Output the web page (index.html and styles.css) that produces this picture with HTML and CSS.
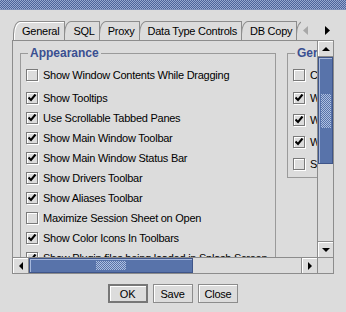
FILE: index.html
```html
<!DOCTYPE html>
<html lang="en">
<head>
  <meta charset="UTF-8" />
  <title>Global Preferences</title>
  <link rel="stylesheet" href="styles.css">
</head>
<body>
  <div class="titlebar"></div>

  <div class="tabstrip">
    <div class="tabs">
      <div class="tab selected">General</div>
      <div class="tab">SQL</div>
      <div class="tab">Proxy</div>
      <div class="tab">Data Type Controls</div>
      <div class="tab">DB Copy</div>
      <div class="tab">Fonts</div>
    </div>
    <div class="tab-arrows">
      <svg width="12" height="11" viewBox="0 0 12 11"><path d="M6 1 L1 5.5 L6 10 Z" fill="#a8a8a8"/></svg>
      <svg width="12" height="11" viewBox="0 0 12 11"><path d="M5 1 L10 5.5 L5 10 Z" fill="#000"/></svg>
    </div>
  </div>

  <div class="scrollpane">
    <div class="viewport">
      <div class="canvas">
        <fieldset class="group appearance">
          <legend>Appearance</legend>
          <label class="row first"><span class="box"></span>Show Window Contents While Dragging</label>
          <label class="row"><span class="box on"></span>Show Tooltips</label>
          <label class="row"><span class="box on"></span>Use Scrollable Tabbed Panes</label>
          <label class="row"><span class="box on"></span>Show Main Window Toolbar</label>
          <label class="row"><span class="box on"></span>Show Main Window Status Bar</label>
          <label class="row"><span class="box on"></span>Show Drivers Toolbar</label>
          <label class="row"><span class="box on"></span>Show Aliases Toolbar</label>
          <label class="row"><span class="box"></span>Maximize Session Sheet on Open</label>
          <label class="row"><span class="box on"></span>Show Color Icons In Toolbars</label>
          <label class="row"><span class="box on"></span>Show Plugin files being loaded in Splash Screen</label>
          <label class="row"><span class="box"></span>Use Short Session Title</label>
        </fieldset>

        <fieldset class="group general">
          <legend>General</legend>
          <label class="row first"><span class="box"></span>Confirm Session Close</label>
          <label class="row"><span class="box on"></span>Warn if JDBC driver not found</label>
          <label class="row"><span class="box on"></span>Warn for unsaved SQL files</label>
          <label class="row"><span class="box on"></span>Warn for unsaved SQL edits</label>
          <label class="row"><span class="box"></span>Save preferences immediately</label>
        </fieldset>
      </div>
    </div>

    <div class="vbar">
      <div class="arrow-btn"><svg width="14" height="14" viewBox="0 0 14 14"><path d="M3 9 L11 9 L7 5 Z" fill="#000"/></svg></div>
      <div class="track">
        <div class="thumb vthumb"><span class="grip"></span></div>
      </div>
      <div class="arrow-btn"><svg width="14" height="14" viewBox="0 0 14 14"><path d="M3 5 L11 5 L7 9 Z" fill="#000"/></svg></div>
    </div>

    <div class="hbar">
      <div class="arrow-btn"><svg width="14" height="14" viewBox="0 0 14 14"><path d="M9 3 L9 11 L5 7 Z" fill="#000"/></svg></div>
      <div class="track">
        <div class="thumb hthumb"><span class="grip"></span></div>
      </div>
      <div class="arrow-btn"><svg width="14" height="14" viewBox="0 0 14 14"><path d="M5 3 L5 11 L9 7 Z" fill="#000"/></svg></div>
    </div>

    <div class="corner"></div>
  </div>

  <div class="buttons">
    <button class="default">OK</button>
    <button>Save</button>
    <button>Close</button>
  </div>
</body>
</html>
```

FILE: styles.css
```css
* { box-sizing: border-box; margin: 0; padding: 0; }
body {
  width: 346px;
  height: 312px;
  overflow: hidden;
  background-color: #dcdcdc;
  font-family: "Liberation Sans", Arial, sans-serif;
  font-size: 11px;
  letter-spacing: -0.25px;
  color: #000;
}
.titlebar {
  height: 10px;
  background: repeating-conic-gradient(#4c6399 0 25%, #95a8d0 0 50%) 0 0 / 2px 2px;
  border-bottom: 1px solid #7f91ba;
}

/* tabs */
.tabstrip {
  display: flex;
  margin-top: 11px;
  height: 19px;
}
.tabs {
  display: flex;
  width: 301px;
  padding-left: 13px;
  overflow: hidden;
}
.tab {
  flex: none;
  height: 19px;
  line-height: 17px;
  padding: 1px 4px 0 8px;
  margin-right: -1px;
  border-top: 1px solid #8c8c8c;
  border-left: 1px solid #8c8c8c;
  border-right: 1px solid #8c8c8c;
  border-top-left-radius: 7px 13px;
  background-color: #dcdcdc;
}
.tab.selected {
  padding-right: 5px;
  box-shadow: inset 1px 1px 0 #fff;
}
.tab-arrows {
  display: flex;
  align-items: center;
  gap: 6px;
  padding-left: 1px;
}

/* scroll pane */
.scrollpane {
  display: grid;
  grid-template-columns: 304px 16px;
  grid-template-rows: 216px 16px;
  margin-left: 12px;
  width: 322px;
  height: 234px;
  border: 1px solid #8c8c8c;
}
.viewport {
  overflow: hidden;
}
.canvas {
  display: flex;
  gap: 11px;
  padding: 5px 0 0 7px;
  width: 500px;
}
.group {
  border: 1px solid #9a9a9a;
  padding: 5px 4px 3px 5px;
  flex: none;
}
.group legend {
  font-weight: bold;
  font-size: 12px;
  letter-spacing: 0;
  color: #3a4f91;
  line-height: 14px;
  margin-left: 2px;
  padding: 0 2px;
}
.appearance {
  width: 256px;
}
.general {
  width: 220px;
  align-self: flex-start;
}
.row {
  display: flex;
  align-items: center;
  gap: 5px;
  height: 20px;
  white-space: nowrap;
}
.row.first {
  margin-bottom: 3px;
}
.general .row + .row {
  margin-top: 2px;
}
.box {
  width: 12px;
  height: 12px;
  margin-bottom: 1px;
  border: 1px solid #7a7a7a;
  box-shadow: 1px 1px 0 #fff, inset 1px 1px 0 #fff;
  flex: none;
}
.box.on {
  background: url("data:image/svg+xml;utf8,<svg xmlns='http://www.w3.org/2000/svg' width='10' height='10' viewBox='0 0 10 10'><path d='M1.5 4.5 L4 7 L8.5 1.5' stroke='black' stroke-width='2' fill='none'/></svg>") center / 10px 10px no-repeat;
}

/* scrollbars */
.vbar, .hbar {
  display: flex;
  background-color: #dcdcdc;
}
.vbar {
  flex-direction: column;
  border-left: 1px solid #8c8c8c;
}
.hbar {
  border-top: 1px solid #8c8c8c;
}
.arrow-btn {
  flex: none;
  display: flex;
  align-items: center;
  justify-content: center;
  box-shadow: inset 1px 1px 0 #fff;
}
.vbar .arrow-btn { width: 15px; height: 16px; }
.vbar .arrow-btn:last-child { border-top: 1px solid #8c8c8c; }
.vbar .arrow-btn:first-child { border-bottom: 1px solid #8c8c8c; }
.hbar .arrow-btn { width: 16px; height: 15px; }
.hbar .arrow-btn:first-child { border-right: 1px solid #8c8c8c; }
.hbar .arrow-btn:last-child { border-left: 1px solid #8c8c8c; }
.track {
  flex: 1;
  display: flex;
}
.vbar .track { flex-direction: column; }
.thumb {
  display: flex;
  align-items: center;
  justify-content: center;
  background-color: #5873aa;
  border: 1px solid #3f5589;
  box-shadow: inset 1px 1px 0 #a6b8dc;
}
.vthumb { height: 107px; }
.hthumb { width: 164px; }
.grip {
  background: repeating-conic-gradient(#5873aa 0 25%, #aebfe0 0 50%) 0 0 / 2px 2px;
}
.vthumb .grip { width: 10px; height: 34px; }
.hthumb .grip { width: 30px; height: 9px; }
.corner {
  border-top: 1px solid #8c8c8c;
  border-left: 1px solid #8c8c8c;
}

/* buttons */
.buttons {
  display: flex;
  justify-content: center;
  gap: 5px;
  margin-top: 10px;
}
button {
  font-family: inherit;
  font-size: 11px;
  letter-spacing: -0.25px;
  min-width: 40px;
  height: 19px;
  padding: 0 6px;
  background-color: #dcdcdc;
  border: 1px solid #8c8c8c;
  box-shadow: inset 1px 1px 0 #fff;
  color: #000;
}
button.default {
  border: 2px solid #777;
}
```
